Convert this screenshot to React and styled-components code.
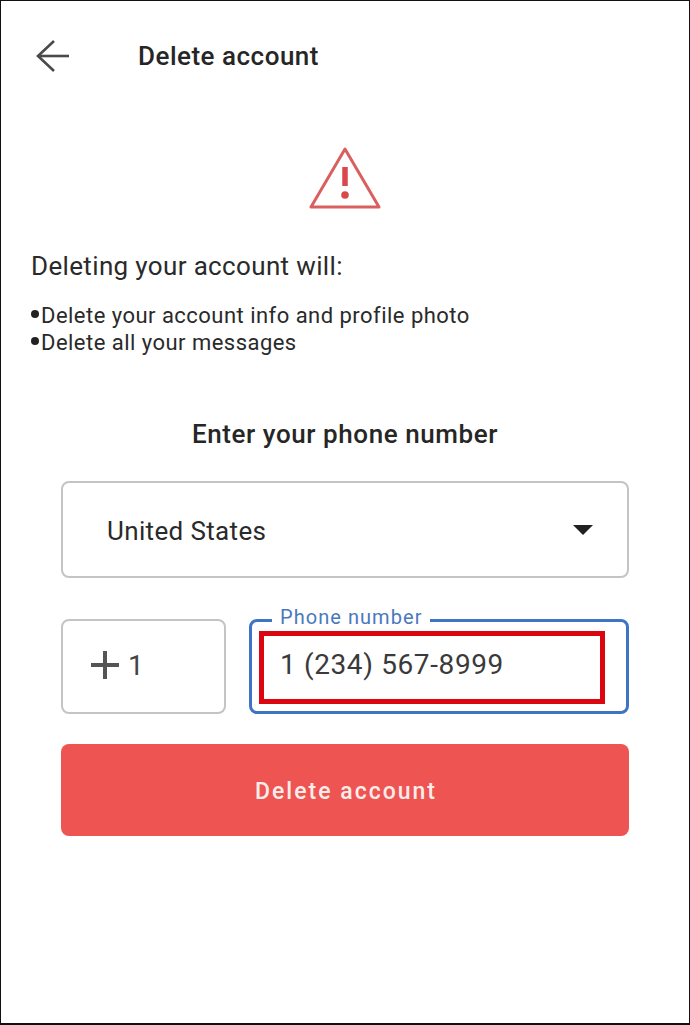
import React from "react";
import styled, { createGlobalStyle } from "styled-components";

const Global = createGlobalStyle`
  html, body { margin: 0; padding: 0; background: #fff; }
  * { box-sizing: border-box; }
  body { font-family: Roboto, "Liberation Sans", sans-serif; color: #212121; }
`;

const Frame = styled.div`
  width: 690px;
  height: 1025px;
  border: 1px solid #111;
  border-bottom-width: 2px;
  background: #fff;
  overflow: hidden;
`;

const Header = styled.header`
  display: flex;
  align-items: center;
  height: 110px;
  padding: 0 0 0 35px;
`;

const BackButton = styled.div`
  display: flex;
  width: 34px;
  height: 34px;
  margin-right: 68px;
  margin-top: -1px;
  color: #4a4a4a;
`;

const Title = styled.h1`
  margin: 0;
  font-size: 26px;
  font-weight: 500;
  line-height: 32px;
  letter-spacing: 0.5px;
  color: #262626;
`;

const IconRow = styled.div`
  display: flex;
  justify-content: center;
  align-items: flex-start;
  padding-top: 36px;
  height: 139px;
`;

const Intro = styled.div`
  padding-left: 30px;
`;

const Lead = styled.p`
  margin: 0;
  font-size: 26px;
  line-height: 32px;
  letter-spacing: 0.35px;
  color: #2a2a2a;
`;

const Bullets = styled.ul`
  list-style: none;
  margin: 20px 0 0;
  padding: 0;
`;

const Bullet = styled.li`
  font-size: 22px;
  line-height: 27px;
  letter-spacing: 0.47px;
  color: #2a2a2a;
  &::before {
    content: "";
    display: inline-block;
    width: 8px;
    height: 8px;
    margin: 0 2px 6px 0;
    border-radius: 50%;
    background: #222;
    vertical-align: middle;
  }
`;

const Prompt = styled.h2`
  margin: 62px 0 0;
  font-size: 26px;
  font-weight: 500;
  line-height: 32px;
  letter-spacing: 0.58px;
  text-align: center;
  color: #262626;
`;

const Form = styled.div`
  display: flex;
  flex-direction: column;
  margin: 31px 60px 0 60px;
`;

const SelectBox = styled.div`
  display: flex;
  align-items: center;
  justify-content: space-between;
  height: 97px;
  padding: 2px 34px 0 44px;
  border: 2px solid #c4c4c4;
  border-radius: 8px;
  font-size: 26px;
  letter-spacing: 0.35px;
  color: #2a2a2a;
`;

const Caret = styled.span`
  width: 0;
  height: 0;
  margin-top: -2px;
  border-left: 10px solid transparent;
  border-right: 10px solid transparent;
  border-top: 10px solid #212121;
`;

const PhoneRow = styled.div`
  display: flex;
  gap: 23px;
  margin-top: 41px;
`;

const CodeBox = styled.div`
  display: flex;
  align-items: center;
  gap: 9px;
  width: 165px;
  height: 95px;
  padding: 0 0 3px 28px;
  border: 2px solid #c4c4c4;
  border-radius: 8px;
  font-size: 28px;
  color: #444;
`;

const PhoneBox = styled.div`
  position: relative;
  flex: 1;
  display: flex;
  align-items: center;
  height: 95px;
  padding: 0 0 4px 28px;
  border: 3px solid #3f74c4;
  border-radius: 8px;
  font-size: 28px;
  letter-spacing: 0.62px;
  color: #3a3a3a;
`;

const FloatLabel = styled.span`
  position: absolute;
  top: -17px;
  left: 20px;
  padding: 0 8px;
  background: #fff;
  font-size: 20px;
  line-height: 24px;
  letter-spacing: 1.05px;
  color: #4a78bd;
`;

const Highlight = styled.span`
  position: absolute;
  top: 9px;
  left: 7px;
  width: 346px;
  height: 73px;
  border: 5px solid #dc0610;
`;

const DeleteButton = styled.button`
  height: 92px;
  margin-top: 30px;
  padding: 2px 0 0 2px;
  border: 0;
  border-radius: 8px;
  background: #ee5451;
  color: #fdecea;
  font-family: inherit;
  font-size: 23px;
  font-weight: 500;
  letter-spacing: 2px;
`;

export default function App() {
  return (
    <>
      <Global />
      <Frame>
        <Header>
          <BackButton>
            <svg width="34" height="34" viewBox="0 0 34 34" fill="none" stroke="currentColor" strokeWidth="2.6">
              <path d="M33 17H2" />
              <path d="M18 2 2 17l16 15" />
            </svg>
          </BackButton>
          <Title>Delete account</Title>
        </Header>
        <IconRow>
          <svg width="72" height="62" viewBox="0 0 72 62" fill="none">
            <path d="M36 2 2 60h68Z" stroke="#d9605f" strokeWidth="3" strokeLinejoin="round" />
            <path d="M36 20v19" stroke="#d9484a" strokeWidth="5.5" />
            <circle cx="36" cy="48" r="3.8" fill="#d9484a" />
          </svg>
        </IconRow>
        <Intro>
          <Lead>Deleting your account will:</Lead>
          <Bullets>
            <Bullet>Delete your account info and profile photo</Bullet>
            <Bullet>Delete all your messages</Bullet>
          </Bullets>
        </Intro>
        <Prompt>Enter your phone number</Prompt>
        <Form>
          <SelectBox>
            United States
            <Caret />
          </SelectBox>
          <PhoneRow>
            <CodeBox>
              <svg width="28" height="28" viewBox="0 0 28 28" stroke="#555" strokeWidth="4">
                <path d="M0 14h28M14 0v28" />
              </svg>
              1
            </CodeBox>
            <PhoneBox>
              <FloatLabel>Phone number</FloatLabel>
              1 (234) 567-8999
              <Highlight />
            </PhoneBox>
          </PhoneRow>
          <DeleteButton>Delete account</DeleteButton>
        </Form>
      </Frame>
    </>
  );
}
